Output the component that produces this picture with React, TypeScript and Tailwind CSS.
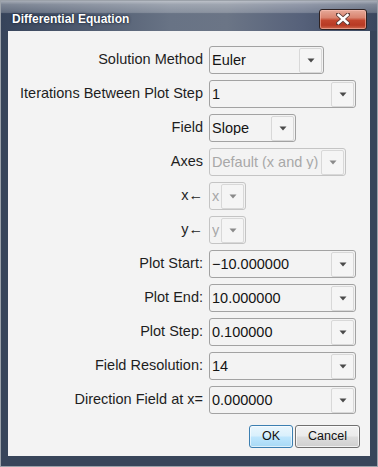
import React from 'react';

interface DropProps {
  value: string;
  width: string;
  disabled?: boolean;
}

const Drop: React.FC<DropProps> = ({ value, width, disabled = false }) => (
  <div
    className={`flex h-[28px] items-center rounded-[3px] border bg-[#f3f3f3] pl-[2px] pr-[1px] ${width} ${
      disabled ? 'border-[#c4c4c4] text-[#a8a8a8]' : 'border-[#a2a2a2] text-[#141414]'
    }`}
  >
    <span className="flex-1 overflow-hidden whitespace-nowrap leading-none">{value}</span>
    <div className="flex h-[25px] w-[23px] shrink-0 items-center justify-center rounded-[2px] border border-[#d8d8d8] bg-[#f5f5f5]">
      <svg width="8" height="5" viewBox="0 0 8 5">
        <path d="M0.5 0.5 H7.5 L4 4.5 Z" fill={disabled ? '#8a8a8a' : '#4a4a4a'} />
      </svg>
    </div>
  </div>
);

const rows: { label: string; value: string; width: string; disabled?: boolean }[] = [
  { label: 'Solution Method', value: 'Euler', width: 'w-[115px]' },
  { label: 'Iterations Between Plot Step', value: '1', width: 'w-[147px]' },
  { label: 'Field', value: 'Slope', width: 'w-[87px]' },
  { label: 'Axes', value: 'Default (x and y)', width: 'w-[137px]', disabled: true },
  { label: 'x\u2190', value: 'x', width: 'w-[37px]', disabled: true },
  { label: 'y\u2190', value: 'y', width: 'w-[37px]', disabled: true },
  { label: 'Plot Start:', value: '\u221210.000000', width: 'w-[147px]' },
  { label: 'Plot End:', value: '10.000000', width: 'w-[147px]' },
  { label: 'Plot Step:', value: '0.100000', width: 'w-[147px]' },
  { label: 'Field Resolution:', value: '14', width: 'w-[147px]' },
  { label: 'Direction Field at x=', value: '0.000000', width: 'w-[147px]' },
];

export default function App() {
  return (
    <div className="h-[467px] w-[378px] font-['Liberation_Sans',Arial,sans-serif]">
      <div className="flex h-full w-full flex-col border border-[#9ba1a9] bg-[#38455a]">
        {/* Title bar */}
        <div className="flex h-[30px] shrink-0 items-center justify-between bg-[linear-gradient(to_bottom,rgba(255,255,255,0.55)_0%,rgba(255,255,255,0.35)_12%,rgba(255,255,255,0.22)_38%,rgba(255,255,255,0)_42%),linear-gradient(to_right,#36435a_0%,#4d596e_20%,#687385_45%,#6b7586_60%,#56617a_80%,#3a475e_100%)] pl-[11px] pr-[10px] pt-[6px]">
          <span className="text-[12px] font-bold text-white [text-shadow:0_0_3px_rgba(20,30,50,0.9),0_0_1px_rgba(20,30,50,0.9)]">
            Differential Equation
          </span>
          <div className="flex h-[21px] w-[48px] items-center justify-center rounded-[3px] border border-[#2e2222] bg-[linear-gradient(to_bottom,#e6a999_0%,#d98470_40%,#c2452d_55%,#b83a24_80%,#cf6a4f_100%)] shadow-[inset_0_0_0_1px_rgba(255,200,190,0.5)]">
            <svg width="14" height="12" viewBox="0 0 14 12">
              <path d="M2 1.5 L12 10.5 M12 1.5 L2 10.5" stroke="#5a3a36" strokeWidth="4.2" strokeLinecap="square" />
              <path d="M2.5 2 L11.5 10 M11.5 2 L2.5 10" stroke="#ffffff" strokeWidth="2.6" strokeLinecap="square" />
            </svg>
          </div>
        </div>

        {/* Content */}
        <div className="mx-[7px] flex h-[425px] shrink-0 flex-col bg-[#f3f3f3] pt-[15px] text-[14.5px]">
          <div className="grid grid-cols-[195px_1fr] gap-x-[6px] gap-y-[6px]">
            {rows.map(r => (
              <React.Fragment key={r.label}>
                <div className="flex h-[28px] items-center justify-end whitespace-nowrap text-[#1e1e1e]">
                  {r.label}
                </div>
                <Drop value={r.value} width={r.width} disabled={r.disabled} />
              </React.Fragment>
            ))}
          </div>

          <div className="mt-[11px] flex justify-end gap-[2px] pr-[10px] text-[12.5px] text-[#111]">
            <button className="flex h-[23px] w-[44px] items-center justify-center rounded-[3px] border border-[#3c7fb1] bg-[linear-gradient(to_bottom,#eaf6fd_0%,#d9f0fc_48%,#bee6fd_52%,#a7d9f5_100%)] shadow-[inset_0_0_0_1px_rgba(255,255,255,0.6)]">
              OK
            </button>
            <button className="flex h-[23px] w-[65px] items-center justify-center rounded-[3px] border border-[#707070] bg-[linear-gradient(to_bottom,#f2f2f2_0%,#ebebeb_48%,#dddddd_52%,#cfcfcf_100%)] shadow-[inset_0_0_0_1px_rgba(255,255,255,0.7)]">
              Cancel
            </button>
          </div>
        </div>
      </div>
    </div>
  );
}
